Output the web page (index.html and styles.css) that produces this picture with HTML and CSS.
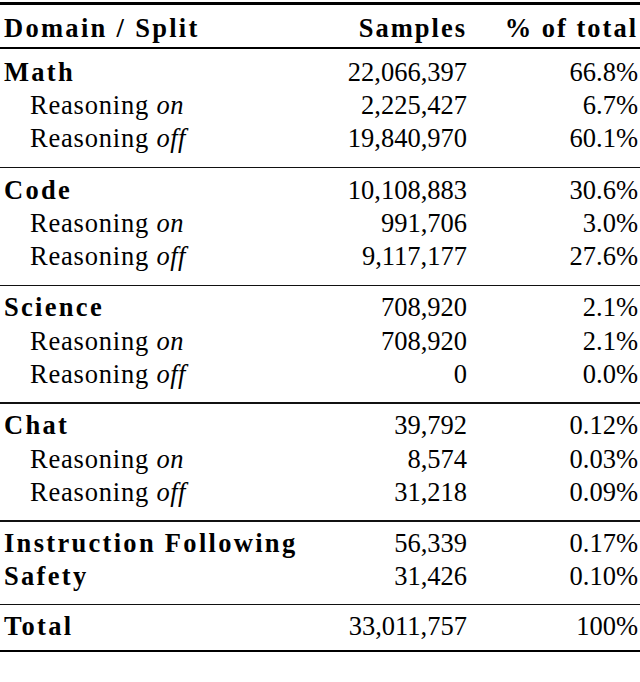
FILE: index.html
```html
<!DOCTYPE html>
<html>
<head>
<meta charset="utf-8">
<link rel="stylesheet" href="styles.css">
</head>
<body>
<div class="table">
  <div class="toprule"></div>
  <div class="row head">
    <div class="c1">Domain / Split</div>
    <div class="c2">Samples</div>
    <div class="c3">% of total</div>
  </div>
  <div class="headrule"></div>

  <div class="row group"><div class="c1">Math</div><div class="c2">22,066,397</div><div class="c3">66.8%</div></div>
  <div class="row sub"><div class="c1">Reasoning <i>on</i></div><div class="c2">2,225,427</div><div class="c3">6.7%</div></div>
  <div class="row sub"><div class="c1">Reasoning <i>off</i></div><div class="c2">19,840,970</div><div class="c3">60.1%</div></div>
  <div class="midrule"></div>

  <div class="row group"><div class="c1">Code</div><div class="c2">10,108,883</div><div class="c3">30.6%</div></div>
  <div class="row sub"><div class="c1">Reasoning <i>on</i></div><div class="c2">991,706</div><div class="c3">3.0%</div></div>
  <div class="row sub"><div class="c1">Reasoning <i>off</i></div><div class="c2">9,117,177</div><div class="c3">27.6%</div></div>
  <div class="midrule"></div>

  <div class="row group"><div class="c1">Science</div><div class="c2">708,920</div><div class="c3">2.1%</div></div>
  <div class="row sub"><div class="c1">Reasoning <i>on</i></div><div class="c2">708,920</div><div class="c3">2.1%</div></div>
  <div class="row sub"><div class="c1">Reasoning <i>off</i></div><div class="c2">0</div><div class="c3">0.0%</div></div>
  <div class="midrule"></div>

  <div class="row group"><div class="c1">Chat</div><div class="c2">39,792</div><div class="c3">0.12%</div></div>
  <div class="row sub"><div class="c1">Reasoning <i>on</i></div><div class="c2">8,574</div><div class="c3">0.03%</div></div>
  <div class="row sub"><div class="c1">Reasoning <i>off</i></div><div class="c2">31,218</div><div class="c3">0.09%</div></div>
  <div class="midrule"></div>

  <div class="row group"><div class="c1">Instruction Following</div><div class="c2">56,339</div><div class="c3">0.17%</div></div>
  <div class="row group"><div class="c1">Safety</div><div class="c2">31,426</div><div class="c3">0.10%</div></div>
  <div class="midrule tight"></div>

  <div class="row group"><div class="c1">Total</div><div class="c2">33,011,757</div><div class="c3">100%</div></div>
  <div class="bottomrule"></div>
</div>
</body>
</html>
```

FILE: styles.css
```css
html, body {
  margin: 0;
  padding: 0;
  background: #ffffff;
}

body {
  font-family: "Liberation Serif", "Times New Roman", serif;
  font-size: 26.5px;
  color: #000;
}

.table {
  width: 640px;
  display: flex;
  flex-direction: column;
}

.toprule {
  height: 2.5px;
  background: #000;
  margin-top: 2px;
  margin-bottom: 7px;
}

.headrule {
  height: 1.6px;
  background: #000;
  margin-top: 2.5px;
  margin-bottom: 7px;
}

.midrule {
  height: 1.4px;
  background: #111;
  margin-top: 11px;
  margin-bottom: 5.5px;
}

.midrule.tight {
  margin-top: 10px;
  margin-bottom: 4.5px;
}

.bottomrule {
  height: 2.5px;
  background: #000;
  margin-top: 7px;
}

.row {
  display: grid;
  grid-template-columns: minmax(0, 1fr) 200px 171px;
  height: 33.3px;
  line-height: 33.3px;
  padding: 0 2px 0 4px;
  white-space: nowrap;
}

.c1 {
  overflow: visible;
}

.c2, .c3 {
  text-align: right;
}

.head, .group .c1 {
  font-weight: bold;
  letter-spacing: 2.3px;
}

.head .c2, .head .c3 {
  letter-spacing: 2px;
}

.sub .c1 {
  padding-left: 26px;
  letter-spacing: 0.8px;
}

.sub i {
  letter-spacing: 0.4px;
}
```
